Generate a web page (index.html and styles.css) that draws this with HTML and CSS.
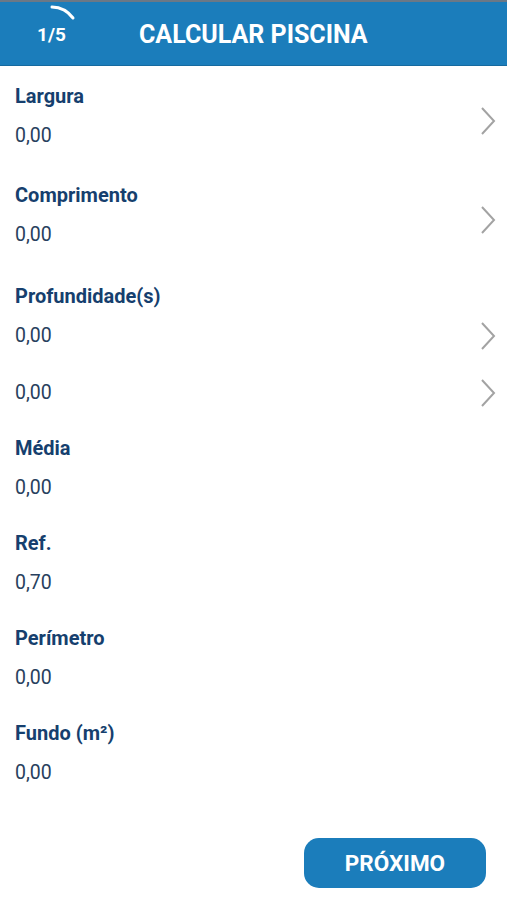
FILE: index.html
```html
<!DOCTYPE html>
<html lang="pt">
<head>
  <meta charset="UTF-8">
  <meta name="viewport" content="width=device-width, initial-scale=1.0">
  <title>Calcular Piscina</title>
<link rel="stylesheet" href="styles.css">
</head>
<body>
  <!-- cabeçalho -->
  <div class="header">
    <div class="step">
      <svg class="ring" width="60" height="40" viewBox="0 0 60 40">
        <path d="M30 5 A27 27 0 0 1 51 16" fill="none" stroke="#fff" stroke-width="3" stroke-linecap="round"/>
      </svg>
      <span class="num">1/5</span>
    </div>
    <h1 class="title">CALCULAR PISCINA</h1>
  </div>

  <!-- campos -->
  <div class="form">
    <div class="field link">
      <div class="txt">
        <p class="label">Largura</p>
        <p class="value">0,00</p>
      </div>
      <span class="arrow"><svg width="16" height="30" viewBox="0 0 16 30"><path d="M2 2 L14 15 L2 28" fill="none" stroke="#a3a3a3" stroke-width="2"/></svg></span>
    </div>
    <div class="field link">
      <div class="txt">
        <p class="label">Comprimento</p>
        <p class="value">0,00</p>
      </div>
      <span class="arrow"><svg width="16" height="30" viewBox="0 0 16 30"><path d="M2 2 L14 15 L2 28" fill="none" stroke="#a3a3a3" stroke-width="2"/></svg></span>
    </div>
    <div class="field deep">
      <p class="label">Profundidade(s)</p>
      <div class="row">
        <p class="value">0,00</p>
        <span class="arrow"><svg width="16" height="30" viewBox="0 0 16 30"><path d="M2 2 L14 15 L2 28" fill="none" stroke="#a3a3a3" stroke-width="2"/></svg></span>
      </div>
      <div class="row">
        <p class="value">0,00</p>
        <span class="arrow"><svg width="16" height="30" viewBox="0 0 16 30"><path d="M2 2 L14 15 L2 28" fill="none" stroke="#a3a3a3" stroke-width="2"/></svg></span>
      </div>
    </div>
    <div class="field">
      <p class="label">Média</p>
      <p class="value">0,00</p>
    </div>
    <div class="field">
      <p class="label">Ref.</p>
      <p class="value">0,70</p>
    </div>
    <div class="field">
      <p class="label">Perímetro</p>
      <p class="value">0,00</p>
    </div>
    <div class="field">
      <p class="label">Fundo (m²)</p>
      <p class="value">0,00</p>
    </div>
  </div>

  <div class="footer">
    <input type="button" class="next" value="PRÓXIMO">
  </div>
</body>
</html>
```

FILE: styles.css
```css
*{margin: 0;padding: 0;}
body{
  width: 507px;
  height: 900px;
  background: #fff;
  font-family: Roboto, "Liberation Sans", sans-serif;
  overflow: hidden;
}
.header{
  height: 63px;
  background: #1b7dbb;
  border-top: 2px solid #6b7886;
  display: flex;
  align-items: center;
  box-shadow: 0 1px 0 #166a9f;
}
.header .step{
  width: 106px;
  height: 63px;
  display: flex;
  align-items: center;
  position: relative;
}
.header .ring{
  position: absolute;
  left: 22px;
  top: 0;
}
.header .num{
  color: white;
  font-size: 19px;
  font-weight: bold;
  margin-top: 2px;
  margin-left: 37px;
}
.header .title{
  color: white;
  font-size: 25px;
  font-weight: bold;
  margin-left: 33px;
  margin-top: 2px;
}
.form{
  padding: 12px 11px 0 15px;
}
.field p{
  line-height: 39px;
}
.label{
  color: #163f6e;
  font-size: 20px;
  font-weight: bold;
}
.value{
  color: #283f5e;
  font-size: 19.5px;
}
.field{
  margin-top: 17px;
}
.field.link{
  display: flex;
  align-items: center;
  justify-content: space-between;
  margin-top: 0;
}
.field.link + .field.link{
  margin-top: 21px;
}
.field.link .arrow{
  margin-top: 10px;
}
.field.deep{
  margin-top: 23px;
}
.deep .row{
  display: flex;
  align-items: center;
  justify-content: space-between;
}
.deep .row + .row{
  margin-top: 18px;
}
.arrow{
  width: 16px;
  height: 30px;
}
.footer{
  position: absolute;
  left: 304px;
  top: 838px;
}
.next{
  width: 182px;
  height: 50px;
  border: none;
  border-radius: 15px;
  background: #1b7dbb;
  color: white;
  font-family: Roboto, "Liberation Sans", sans-serif;
  font-size: 22.5px;
  font-weight: bold;
  outline: none;
}
```
